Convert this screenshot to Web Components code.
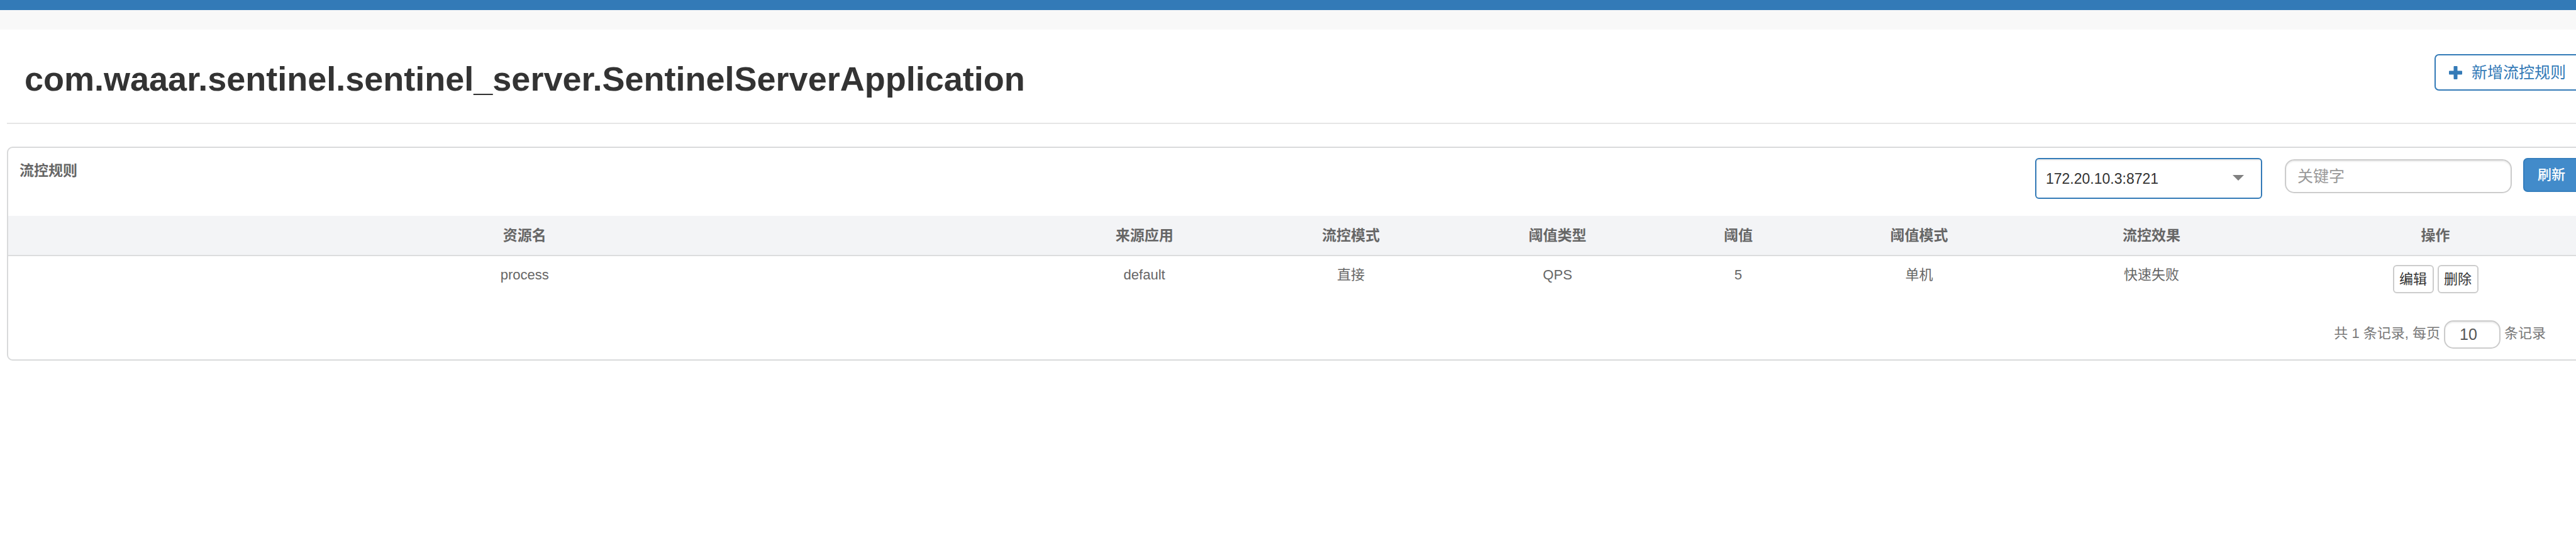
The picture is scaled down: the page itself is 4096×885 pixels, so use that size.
<!DOCTYPE html>
<html lang="zh-CN">
<head>
<meta charset="utf-8">
<title>流控规则</title>
<style>
  html, body { margin: 0; }
  body {
    background: #fff;
    color: #666;
    font-family: "Liberation Sans", "Noto Sans CJK SC", sans-serif;
    font-size: 22px;
    line-height: 32px;
    overflow-x: hidden;
  }
</style>
</head>
<body>
<sentinel-app></sentinel-app>

<template id="app-tpl">
  <style>
    :host { display: block; overflow: hidden; }
    .bar { height: 16px; background: #337ab7; }
    .strip { height: 31px; background: #f8f8f8; }
    /* the content column is a little wider than the window */
    main { margin-left: 11px; margin-right: -25px; }
  </style>
  <div class="bar"></div>
  <div class="strip"></div>
  <main>
    <page-heading>
      com.waaar.sentinel.sentinel_server.SentinelServerApplication
      <add-button slot="action">新增流控规则</add-button>
    </page-heading>
    <rule-panel>
      <span slot="title">流控规则</span>
      <machine-select slot="tools"></machine-select>
      <keyword-input slot="tools"></keyword-input>
      <refresh-button slot="tools">刷新</refresh-button>
      <rule-table></rule-table>
      <rule-pager slot="footer"></rule-pager>
    </rule-panel>
  </main>
</template>

<template id="heading-tpl">
  <style>
    :host {
      display: flex; justify-content: space-between; align-items: flex-start;
      box-sizing: border-box; height: 150px; padding: 39px 18px 0 28px;
      border-bottom: 2px solid #e5e5e5;
    }
    h1 { margin: 8px 0 0; font-size: 54px; line-height: 62px; font-weight: 700; color: #333; white-space: nowrap; }
  </style>
  <h1><slot></slot></h1>
  <slot name="action"></slot>
</template>

<template id="add-tpl">
  <style>
    :host { display: block; }
    button {
      display: flex; align-items: center; gap: 15px; height: 58px; padding: 0 21px;
      border: 2px solid #337ab7; border-radius: 7px; background: #fff; color: #337ab7;
      font: inherit; font-size: 25px; line-height: 36px; white-space: nowrap; cursor: pointer;
    }
    svg { width: 21px; height: 21px; }
  </style>
  <button type="button">
    <svg viewBox="0 0 21 21" aria-hidden="true"><path fill="currentColor" d="M8.500 0h4q1 0 1 1v6.500h6.500q1 0 1 1v4q0 1-1 1h-6.500v6.500q0 1-1 1h-4q-1 0-1-1v-6.500h-6.500q-1 0-1-1v-4q0-1 1-1h6.500v-6.500q0-1 1-1z"/></svg>
    <span><slot></slot></span>
  </button>
</template>

<template id="panel-tpl">
  <style>
    :host {
      display: block; margin-top: 36px; background: #fff;
      border: 2px solid #d9dadb; border-radius: 9px;
    }
    header {
      display: flex; justify-content: space-between; align-items: flex-start;
      box-sizing: border-box; height: 108px; padding: 16px 17px 0 18px;
    }
    h2 { margin: 4px 0 0; font-size: 23px; line-height: 32px; font-weight: 700; }
    .tools { display: flex; align-items: flex-start; }
  </style>
  <header>
    <h2><slot name="title"></slot></h2>
    <div class="tools"><slot name="tools"></slot></div>
  </header>
  <slot></slot>
  <slot name="footer"></slot>
</template>

<template id="machine-tpl">
  <style>
    :host { display: block; position: relative; width: 361px; margin-right: 36px; }
    select {
      appearance: none; display: block; box-sizing: border-box; width: 100%; height: 65px;
      margin: 0; padding: 0 48px 0 15px; border: 2px solid #337ab7; border-radius: 6px;
      background: #fff; box-shadow: inset 0 2px 2px rgba(0,0,0,.075);
      color: #333; font: inherit; font-size: 23px; line-height: 32px;
    }
    svg { position: absolute; right: 29px; top: 27px; width: 18px; height: 9px; pointer-events: none; }
  </style>
  <select aria-label="机器"><option selected>172.20.10.3:8721</option></select>
  <svg viewBox="0 0 18 9" aria-hidden="true"><path fill="#808080" d="M0 0h18l-9 9z"/></svg>
</template>

<template id="keyword-tpl">
  <style>
    :host { display: block; width: 361px; margin: 2px 18px 0 0; }
    input {
      display: block; box-sizing: border-box; width: 100%; height: 54px; margin: 0; padding: 0 18px;
      border: 2px solid #ccc; border-radius: 15px; background: #fff;
      box-shadow: inset 0 2px 2px rgba(0,0,0,.075);
      color: #555; font: inherit; font-size: 25px; line-height: 36px;
    }
    input::placeholder { color: #999; opacity: 1; }
  </style>
  <input type="text" placeholder="关键字" aria-label="关键字">
</template>

<template id="refresh-tpl">
  <style>
    :host { display: block; }
    button {
      display: block; width: 90px; height: 54px; margin: 0; padding: 0;
      border: 2px solid #357ebd; border-radius: 7px; background: #428bca; color: #fff;
      font: inherit; font-size: 22px; font-weight: 500; line-height: 32px; cursor: pointer;
    }
  </style>
  <button type="button"><slot></slot></button>
</template>

<template id="table-tpl">
  <style>
    :host { display: block; }
    table { width: 100%; table-layout: fixed; border-collapse: separate; border-spacing: 0; text-align: center; }
    th {
      box-sizing: border-box; height: 64px; padding: 0; background: #f3f4f6;
      border-bottom: 2px solid #dcddde; font-size: 23px; line-height: 32px; font-weight: 700;
    }
    td { padding: 14px 0 0; vertical-align: top; line-height: 32px; }
    .actions { display: flex; justify-content: center; gap: 6px; }
    button {
      width: 65px; height: 45px; margin: 0; padding: 0; border: 2px solid #ccc; border-radius: 6px;
      background: #fff; color: #333; font: inherit; cursor: pointer;
    }
  </style>
  <table>
    <colgroup>
      <col style="width:40%"><col style="width:8%"><col style="width:8%"><col style="width:8%">
      <col style="width:6%"><col style="width:8%"><col style="width:10%"><col style="width:12%">
    </colgroup>
    <thead>
      <tr><th>资源名</th><th>来源应用</th><th>流控模式</th><th>阈值类型</th><th>阈值</th><th>阈值模式</th><th>流控效果</th><th>操作</th></tr>
    </thead>
    <tbody>
      <tr>
        <td>process</td><td>default</td><td>直接</td><td>QPS</td><td>5</td><td>单机</td><td>快速失败</td>
        <td><div class="actions"><button type="button">编辑</button><button type="button">删除</button></div></td>
      </tr>
    </tbody>
  </table>
</template>

<template id="pager-tpl">
  <style>
    :host { display: block; padding: 43px 71px 17px 0; color: #777; }
    label { display: flex; justify-content: flex-end; align-items: flex-start; gap: 6px; line-height: 42px; white-space: nowrap; }
    input {
      box-sizing: border-box; width: 90px; height: 45px; margin: 0; padding: 0 0 0 23px;
      border: 2px solid #ccc; border-radius: 15px; background: #fff;
      box-shadow: inset 0 2px 2px rgba(0,0,0,.075);
      color: #555; font: inherit; font-size: 25px; line-height: 36px;
    }
  </style>
  <label><span>共 1 条记录, 每页</span><input type="text" inputmode="numeric" value="10"><span>条记录</span></label>
</template>

<script>
  const define = (name, templateId) => {
    customElements.define(name, class extends HTMLElement {
      constructor() {
        super();
        const template = document.getElementById(templateId);
        this.attachShadow({ mode: 'open' }).append(document.importNode(template.content, true));
      }
    });
  };
  define('add-button', 'add-tpl');
  define('page-heading', 'heading-tpl');
  define('machine-select', 'machine-tpl');
  define('keyword-input', 'keyword-tpl');
  define('refresh-button', 'refresh-tpl');
  define('rule-table', 'table-tpl');
  define('rule-pager', 'pager-tpl');
  define('rule-panel', 'panel-tpl');
  define('sentinel-app', 'app-tpl');
</script>
</body>
</html>
